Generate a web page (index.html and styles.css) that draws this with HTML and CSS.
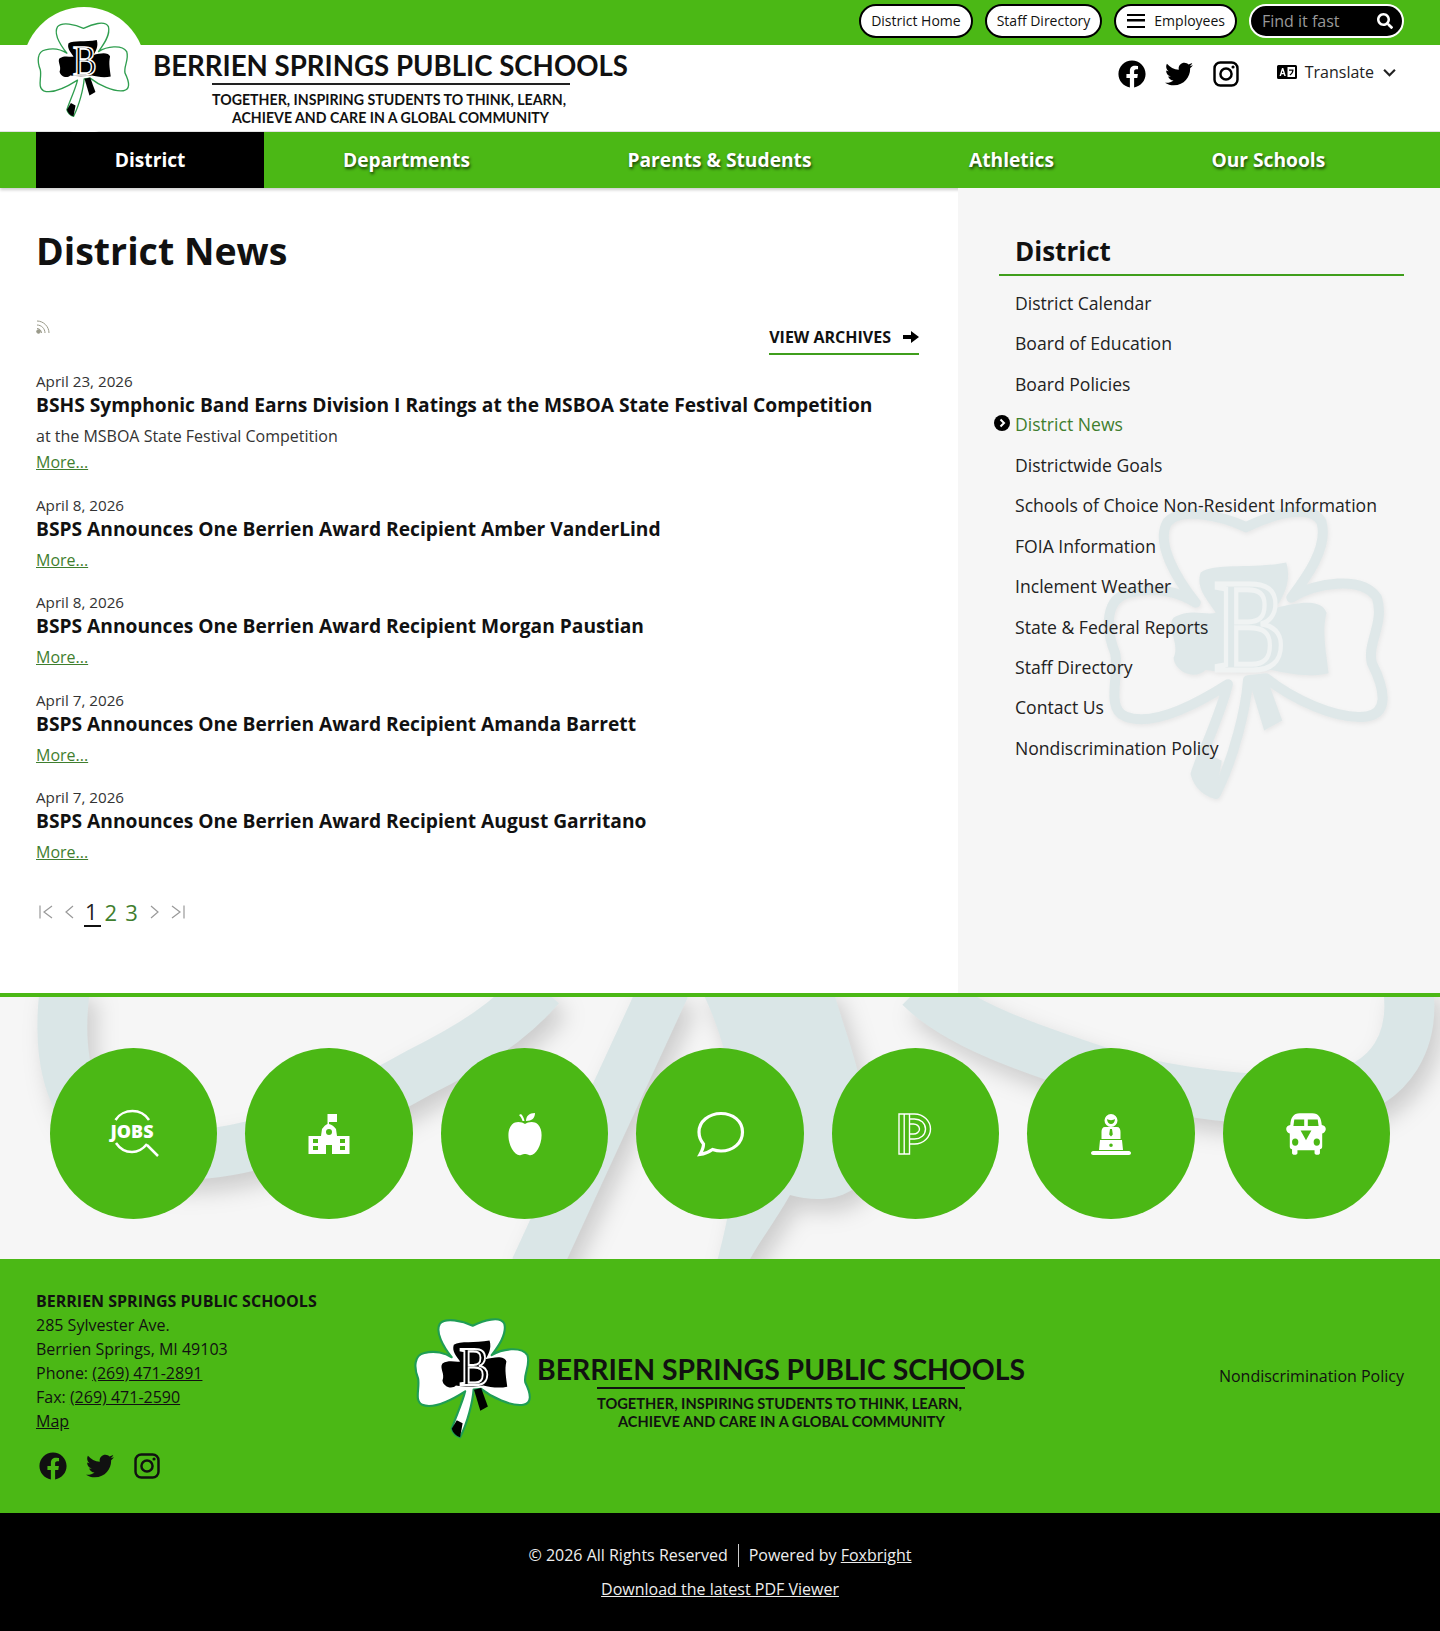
FILE: index.html
```html
<!DOCTYPE html>
<html lang="en">
	<head>
		<meta charset="UTF-8" />
		<meta name="viewport" content="width=device-width, initial-scale=1.0" />
		<title>District News</title>
		<link rel="stylesheet" href="styles.css">
	</head>

	<body>
		<svg class="defs" aria-hidden="true">
			<symbol id="clover" viewBox="48 48 290 295" overflow="visible">
				<path class="clover-leaf" d="M140 145C120 120 100 85 112 65C125 50 165 58 190 70C215 58 255 45 265 65C272 90 250 120 235 140C260 125 305 118 320 140C328 165 310 185 315 205C330 235 330 255 310 258C280 262 235 240 210 220L192 222C190 250 178 300 160 335C150 332 143 325 140 315C150 285 165 255 172 226C150 240 100 270 70 258C50 250 65 215 60 195C50 170 50 140 75 135C100 128 125 135 140 145Z" />
				<path class="clover-blob" d="M145 115C160 105 195 112 230 105C236 125 226 140 220 150C240 145 265 140 270 155C265 175 270 195 272 215C250 220 230 215 215 212C195 215 170 215 150 212C140 222 120 215 118 200C125 185 110 170 118 160C135 150 150 158 160 155C150 140 140 130 145 115Z" />
				<path class="clover-blob" d="M193 222L210 218L226 262L208 272Z" />
				<path class="clover-blob" d="M140 315L152 295L166 302L160 335C150 332 143 325 140 315Z" />
				<text class="clover-letter" x="194" y="212" text-anchor="middle" textLength="72" lengthAdjust="spacingAndGlyphs">B</text>
			</symbol>
			<symbol id="ico-facebook" viewBox="0 0 512 512">
				<path d="M504 256C504 119 393 8 256 8S8 119 8 256c0 123.78 90.69 226.38 209.25 245V327.69h-63V256h63v-54.64c0-62.15 37-96.48 93.67-96.48 27.14 0 55.52 4.84 55.52 4.84v61h-31.28c-30.8 0-40.41 19.12-40.41 38.73V256h68.78l-11 71.69h-57.78V501C413.31 482.38 504 379.78 504 256z" />
			</symbol>
			<symbol id="ico-twitter" viewBox="0 0 512 512">
				<path d="M459.37 151.716c.325 4.548.325 9.097.325 13.645 0 138.72-105.583 298.558-298.558 298.558-59.452 0-114.68-17.219-161.137-47.106 8.447.974 16.568 1.299 25.34 1.299 49.055 0 94.213-16.568 130.274-44.832-46.132-.975-84.792-31.188-98.112-72.772 6.498.974 12.995 1.624 19.818 1.624 9.421 0 18.843-1.3 27.614-3.573-48.081-9.747-84.143-51.98-84.143-102.985v-1.299c13.969 7.797 30.214 12.67 47.431 13.319-28.264-18.843-46.781-51.005-46.781-87.391 0-19.492 5.197-37.36 14.294-52.954 51.655 63.675 129.3 105.258 216.365 109.807-1.624-7.797-2.599-15.918-2.599-24.04 0-57.828 46.782-104.934 104.934-104.934 30.213 0 57.502 12.67 76.67 33.137 23.715-4.548 46.456-13.32 66.599-25.34-7.798 24.366-24.366 44.833-46.132 57.827 21.117-2.273 41.584-8.122 60.426-16.243-14.292 20.791-32.161 39.308-52.628 54.253z" />
			</symbol>
			<symbol id="ico-instagram" viewBox="0 0 448 512">
				<rect x="28" y="60" width="392" height="392" rx="100" fill="none" stroke="currentColor" stroke-width="42" />
				<circle cx="224" cy="256" r="95" fill="none" stroke="currentColor" stroke-width="42" />
				<circle cx="344" cy="136" r="27" />
			</symbol>
			<symbol id="ico-search" viewBox="0 0 512 512">
				<path d="M505 442.7L405.3 343c-4.5-4.5-10.6-7-17-7H372c27.6-35.3 44-79.7 44-128C416 93.1 322.9 0 208 0S0 93.1 0 208s93.1 208 208 208c48.3 0 92.7-16.4 128-44v16.3c0 6.4 2.5 12.5 7 17l99.7 99.7c9.4 9.4 24.6 9.4 33.9 0l28.3-28.3c9.4-9.4 9.4-24.6.1-34zM208 336c-70.7 0-128-57.2-128-128 0-70.7 57.2-128 128-128 70.7 0 128 57.2 128 128 0 70.7-57.2 128-128 128z" />
			</symbol>
		</svg>

		<div class="top-bar">
			<a class="pill" href="#">District Home</a>
			<a class="pill" href="#">Staff Directory</a>
			<a class="pill pill-menu" href="#"><span class="burger"></span>Employees</a>
			<div class="search">
				<span>Find it fast</span>
				<svg class="search-ico"><use href="#ico-search" /></svg>
			</div>
		</div>

		<header class="site-header">
			<div class="badge">
				<svg class="badge-clover"><use href="#clover" /></svg>
			</div>
			<svg class="brand" viewBox="0 0 480 84" width="480" height="84">
				<text class="brand-name" x="0" y="31" textLength="475" lengthAdjust="spacingAndGlyphs">BERRIEN SPRINGS PUBLIC SCHOOLS</text>
				<rect x="59" y="38" width="358" height="2" fill="#222" />
				<text class="brand-tag" x="59" y="60" textLength="354" lengthAdjust="spacingAndGlyphs">TOGETHER, INSPIRING STUDENTS TO THINK, LEARN,</text>
				<text class="brand-tag" x="79" y="78" textLength="317" lengthAdjust="spacingAndGlyphs">ACHIEVE AND CARE IN A GLOBAL COMMUNITY</text>
			</svg>
			<div class="header-tools">
				<div class="social">
					<a href="#"><svg class="social-ico"><use href="#ico-facebook" /></svg></a>
					<a href="#"><svg class="social-ico"><use href="#ico-twitter" /></svg></a>
					<a href="#"><svg class="social-ico"><use href="#ico-instagram" /></svg></a>
				</div>
				<div class="translate">
					<svg class="translate-ico" viewBox="0 0 20 14">
						<path d="M1.5 0h17A1.5 1.5 0 0 1 20 1.500v11a1.500 1.500 0 0 1-1.500 1.500h-17A1.500 1.500 0 0 1 0 12.500v-11A1.500 1.500 0 0 1 1.500 0z" />
						<rect x="10.500" y="2" width="7.500" height="10" fill="#fff" />
						<path d="M2.500 11L5 3h1.300l2.500 8H7.300l-.5-1.700H4.500L4 11zM4.900 8h1.500l-.7-2.600z" fill="#fff" />
						<path d="M12 4.500h4.500v1.200c-.4 2-1.500 3.600-3.300 4.800l-.7-1c1.500-1 2.300-2.100 2.600-3.800H12z" />
					</svg>
					<span>Translate</span>
					<svg class="chevron" viewBox="0 0 12 8"><path d="M1 1.500l5 5 5-5" /></svg>
				</div>
			</div>
		</header>

		<nav class="main-nav">
			<a class="active" href="#">District</a>
			<a href="#">Departments</a>
			<a href="#">Parents &amp; Students</a>
			<a href="#">Athletics</a>
			<a href="#">Our Schools</a>
		</nav>

		<div class="page">
			<main class="content">
				<h1>District News</h1>
				<div class="news-tools">
					<svg class="rss" viewBox="0 0 14 14">
						<path d="M1 1c6.500 0 12 5.500 12 12M1 5c4.400 0 8 3.600 8 8" />
						<circle cx="2.500" cy="11.500" r="1.800" />
						<path d="M1 8.500c2.500 0 4.500 2 4.500 4.500" />
					</svg>
					<a class="archives" href="#">VIEW ARCHIVES
						<svg class="arrow" viewBox="0 0 16 12"><path d="M0 4h8V0l8 6-8 6V8H0z" /></svg>
					</a>
				</div>

				<article class="news-item">
					<div class="news-date">April 23, 2026</div>
					<h2>BSHS Symphonic Band Earns Division I Ratings at the MSBOA State Festival Competition</h2>
					<p>at the MSBOA State Festival Competition</p>
					<a class="more" href="#">More...</a>
				</article>
				<article class="news-item">
					<div class="news-date">April 8, 2026</div>
					<h2>BSPS Announces One Berrien Award Recipient Amber VanderLind</h2>
					<a class="more" href="#">More...</a>
				</article>
				<article class="news-item">
					<div class="news-date">April 8, 2026</div>
					<h2>BSPS Announces One Berrien Award Recipient Morgan Paustian</h2>
					<a class="more" href="#">More...</a>
				</article>
				<article class="news-item">
					<div class="news-date">April 7, 2026</div>
					<h2>BSPS Announces One Berrien Award Recipient Amanda Barrett</h2>
					<a class="more" href="#">More...</a>
				</article>
				<article class="news-item">
					<div class="news-date">April 7, 2026</div>
					<h2>BSPS Announces One Berrien Award Recipient August Garritano</h2>
					<a class="more" href="#">More...</a>
				</article>

				<div class="pager">
					<svg class="pager-ico" viewBox="0 0 16 16"><path d="M2 1.500v13M14 2L6 8l8 6" /></svg>
					<svg class="pager-ico pager-prev" viewBox="0 0 16 16"><path d="M11 2L4 8l7 6" /></svg>
					<a class="current" href="#">1</a>
					<a href="#">2</a>
					<a href="#">3</a>
					<svg class="pager-ico" viewBox="0 0 16 16"><path d="M5 2l7 6-7 6" /></svg>
					<svg class="pager-ico" viewBox="0 0 16 16"><path d="M2 2l8 6-8 6M14 1.500v13" /></svg>
				</div>
			</main>

			<aside class="sidebar">
				<svg class="sidebar-mark"><use href="#clover" /></svg>
				<h2>District</h2>
				<ul>
					<li><a href="#">District Calendar</a></li>
					<li><a href="#">Board of Education</a></li>
					<li><a href="#">Board Policies</a></li>
					<li class="current">
						<svg class="current-dot" viewBox="0 0 16 16"><circle cx="8" cy="8" r="8" /><path d="M6.500 4.500L10 8l-3.500 3.500" /></svg>
						<a href="#">District News</a>
					</li>
					<li><a href="#">Districtwide Goals</a></li>
					<li><a href="#">Schools of Choice Non-Resident Information</a></li>
					<li><a href="#">FOIA Information</a></li>
					<li><a href="#">Inclement Weather</a></li>
					<li><a href="#">State &amp; Federal Reports</a></li>
					<li><a href="#">Staff Directory</a></li>
					<li><a href="#">Contact Us</a></li>
					<li><a href="#">Nondiscrimination Policy</a></li>
				</ul>
			</aside>
		</div>

		<section class="quick-links">
			<svg class="band-mark" viewBox="0 0 1440 262" preserveAspectRatio="none">
				<g class="band-strokes">
					<path d="M65 -10C55 70 70 135 150 155C240 170 340 120 420 75C470 50 510 25 540 -10" />
					<path d="M535 272L665 -10" />
					<path class="band-fill" d="M700 -10H832C850 50 875 110 868 170C860 200 825 208 790 198C775 225 755 250 745 272H715C735 200 755 100 700 -10Z" />
					<path d="M920 -10C960 30 1040 55 1110 78C1170 95 1260 108 1330 100C1395 88 1415 40 1408 -10" />
				</g>
			</svg>
			<a class="quick-link" href="#">
				<svg class="quick-ico" viewBox="0 0 50 50">
					<path class="line" d="M6.500 11C10 5 17 2 23.500 2S36 5 40 11M7 34c4 6 10 9 16 9 6 0 11-3 15-8" />
					<path class="line" d="M38 36l11 11" stroke-width="3.200" />
					<text class="jobs-text" x="1.500" y="29" textLength="43" lengthAdjust="spacingAndGlyphs">JOBS</text>
				</svg>
			</a>
			<a class="quick-link" href="#">
				<svg class="quick-ico" viewBox="0 0 50 50">
					<path class="solid" d="M23.500 5H33v8H25v2c3 .7 5 2.500 7 5l1 7h12.500v18h-41V27H17l1-7c2-2.500 3.500-4.300 5.500-5z" />
					<path d="M22 36h6v9h-6zM25 20a3 3 0 1 1 0 6 3 3 0 0 1 0-6zM9 30h5v4H9zM36 30h5v4h-5zM9 37h5v4H9zM36 37h5v4h-5z" fill="#4bb815" />
				</svg>
			</a>
			<a class="quick-link" href="#">
				<svg class="quick-ico" viewBox="0 0 50 50">
					<path class="solid" d="M25 15c-3-2-9-3.500-13 .5C6.500 21 8 33 12 40c2.500 4.500 6 7 9 6 2-.6 2.500-1 4-1s2 .4 4 1c3 1 6.500-1.500 9-6 4-7 5.500-19 0-24.500-4-4-10-2.500-13-.5z" />
					<path class="solid" d="M26 12c0-5 3-8 9-8 0 5-3 8-9 8zM19 6l2-1c2 2 3 4 3.500 7h-2c-.5-2-1.500-4-3.500-6z" />
				</svg>
			</a>
			<a class="quick-link" href="#">
				<svg class="quick-ico" viewBox="0 0 50 50">
					<path class="line chat" d="M26 4.500C14 4.500 4 12.500 4 23c0 4.500 1.500 8.500 4.500 12 0 3.500-1.500 7-3.500 10.500 4.500-.5 9-2.500 12.500-5 3 1 5.500 1.500 8.500 1.500 12 0 21.500-8 21.500-19S38 4.500 26 4.500z" />
				</svg>
			</a>
			<a class="quick-link" href="#">
				<svg class="quick-ico" viewBox="0 0 50 50">
					<path class="line thin" d="M9 5h10.500v40H9zM14.200 5v40M19.500 5h5c9 0 16 7 16 15s-7 15-16 15h-5M19.500 10h5c6 0 11 4 11 10s-5 10-11 10h-5M19.500 15h4c3 0 6 2 6 5s-3 5-6 5h-4" />
				</svg>
			</a>
			<a class="quick-link" href="#">
				<svg class="quick-ico" viewBox="0 0 50 50">
					<path class="solid" d="M25 5a6.500 6.500 0 1 1 0 13 6.500 6.500 0 0 1 0-13zM19 18h12c2.500 0 3.500 2 3.500 5v7h-19v-7c0-3 1-5 3.500-5zM14 31h22l1 10H13zM7 42h36c1 0 2 1 2 2s-1 2-2 2H7c-1 0-2-1-2-2s1-2 2-2z" />
					<path d="M25 34.500a1.800 1.800 0 1 1 0 3.600 1.800 1.800 0 0 1 0-3.600zM24 20h2l.8 5.500L25 27.500l-1.800-2zM21 10c2 1.500 6 1.500 8 0 0 3-2 5-4 5s-4-2-4-5z" fill="#4bb815" />
				</svg>
			</a>
			<a class="quick-link" href="#">
				<svg class="quick-ico" viewBox="0 0 50 50">
					<g transform="translate(25 25) scale(.9) translate(-25 -26)">
						<path class="solid" d="M18 3h14c7 0 10 5 10.500 13 2.500.5 4.500 2 4.500 4.500S45 25 43 25.500V40c0 2-1 3-2.500 3V47c0 1-1 2-3 2s-3-1-3-2v-3H15.500v3c0 1-1 2-3 2s-3-1-3-2V43C8 43 7 42 7 40V25.500C5 25 3 23 3 20.500S5 16.500 7.500 16C8 8 11 3 18 3z" />
						<path d="M12 10h11v7H11zM27 10h11l1 7H27zM19 22h12l-6 11zM13 31a3.500 4 0 1 1 0 8 3.500 4 0 0 1 0-8zM37 31a3.500 4 0 1 1 0 8 3.500 4 0 0 1 0-8z" fill="#4bb815" />
					</g>
				</svg>
			</a>
		</section>

		<footer class="site-footer">
			<div class="address">
				<strong>BERRIEN SPRINGS PUBLIC SCHOOLS</strong>
				<div>285 Sylvester Ave.</div>
				<div>Berrien Springs, MI 49103</div>
				<div>Phone: <a href="#">(269) 471-2891</a></div>
				<div>Fax: <a href="#">(269) 471-2590</a></div>
				<div><a href="#">Map</a></div>
				<div class="social">
					<a href="#"><svg class="social-ico"><use href="#ico-facebook" /></svg></a>
					<a href="#"><svg class="social-ico"><use href="#ico-twitter" /></svg></a>
					<a href="#"><svg class="social-ico"><use href="#ico-instagram" /></svg></a>
				</div>
			</div>
			<div class="footer-logo">
				<svg class="footer-clover"><use href="#clover" /></svg>
				<svg class="brand" viewBox="0 0 490 84" width="490" height="84">
					<text class="brand-name" x="0" y="31" textLength="488" lengthAdjust="spacingAndGlyphs">BERRIEN SPRINGS PUBLIC SCHOOLS</text>
					<rect x="60" y="38" width="368" height="2" fill="#111" />
					<text class="brand-tag" x="60" y="60" textLength="365" lengthAdjust="spacingAndGlyphs">TOGETHER, INSPIRING STUDENTS TO THINK, LEARN,</text>
					<text class="brand-tag" x="81" y="78" textLength="327" lengthAdjust="spacingAndGlyphs">ACHIEVE AND CARE IN A GLOBAL COMMUNITY</text>
				</svg>
			</div>
			<div class="footer-right"><a href="#">Nondiscrimination Policy</a></div>
		</footer>

		<div class="legal">
			<div class="legal-row">
				<span class="copyright">© 2026 All Rights Reserved</span>
				<span>Powered by <a href="#">Foxbright</a></span>
			</div>
			<div><a href="#">Download the latest PDF Viewer</a></div>
		</div>
	</body>
</html>
```

FILE: styles.css
```css
* {
	box-sizing: border-box;
}

body {
	margin: 0;
	font-family: 'Open Sans', sans-serif;
	color: #111;
	background: #fff;
}

.defs {
	display: none;
}

h1,
h2,
p,
ul {
	margin: 0;
	padding: 0;
}

/* shamrock colours, overridden per use */
.clover-leaf {
	fill: var(--leaf, #fff);
	stroke: var(--edge, #2f9e4f);
	stroke-width: var(--edge-w, 4);
	stroke-linejoin: round;
}
.clover-blob {
	fill: var(--blob, #000);
}
.clover-letter {
	font-family: 'Liberation Serif', serif;
	font-size: 130px;
	fill: var(--blob, #000);
	stroke: var(--letter, #fff);
	stroke-width: 5;
}

.top-bar {
	display: flex;
	justify-content: flex-end;
	align-items: center;
	gap: 12px;
	height: 45px;
	padding: 0 36px 4px;
	background: #4bb815;
}

.pill {
	display: flex;
	align-items: center;
	height: 34px;
	padding: 0 10px;
	border: 2px solid #000;
	border-radius: 17px;
	background: #fff;
	color: #111;
	font-size: 14px;
	text-decoration: none;
}
.pill-menu {
	padding-left: 9px;
}
.burger {
	width: 18px;
	height: 14px;
	margin: 0 9px 0 2px;
	border-top: 2.500px solid #000;
	border-bottom: 2.500px solid #000;
	background: linear-gradient(#000, #000) center / 100% 2.500px no-repeat;
}

.search {
	display: flex;
	align-items: center;
	justify-content: space-between;
	width: 155px;
	height: 34px;
	padding: 0 9px 0 11px;
	border: 2px solid #fff;
	border-radius: 17px;
	background: #000;
	color: #999;
	font-size: 16px;
}
.search-ico {
	width: 16px;
	height: 16px;
	fill: #fff;
}

.site-header {
	position: relative;
	display: flex;
	align-items: flex-start;
	height: 87px;
	padding-left: 153px;
	border-bottom: 1px solid #e4e4e4;
}

.badge {
	position: absolute;
	top: -38px;
	left: 22px;
	width: 124px;
	height: 126px;
	border-radius: 50%;
	background: #fff;
}
.badge-clover {
	position: absolute;
	top: 14px;
	left: 14px;
	width: 97px;
	height: 98px;
}

.brand {
	overflow: visible;
}
.brand-name {
	font-family: Lato, sans-serif;
	font-size: 29px;
	font-weight: 700;
	fill: #111;
}
.brand-tag {
	font-family: Lato, sans-serif;
	font-size: 15.500px;
	font-weight: 700;
	fill: #111;
}

.header-tools {
	display: flex;
	align-items: center;
	margin-left: auto;
	padding: 14px 44px 0 0;
}
.social {
	display: flex;
	gap: 19px;
}
.social a {
	display: block;
	height: 30px;
	color: #000;
}
.social-ico {
	width: 28px;
	height: 30px;
	fill: currentColor;
}
.translate {
	display: flex;
	align-items: center;
	margin: -4px 0 0 37px;
	font-size: 16px;
	color: #222;
}
.translate-ico {
	width: 20px;
	height: 14px;
	margin-right: 8px;
}
.chevron {
	width: 13px;
	height: 9px;
	margin-left: 9px;
	fill: none;
	stroke: #222;
	stroke-width: 2;
}

.main-nav {
	position: relative;
	display: flex;
	height: 56px;
	padding: 0 36px;
	background: #4bb815;
	box-shadow: 0 2px 3px rgba(0, 0, 0, 0.2);
}
.main-nav a {
	flex: 1 1 auto;
	display: flex;
	align-items: center;
	justify-content: center;
	padding-bottom: 2px;
	color: #fff;
	font-size: 19.200px;
	font-weight: 700;
	text-decoration: none;
	text-shadow: 1px 2px 3px rgba(0, 0, 0, 0.65);
}
.main-nav a.active {
	background: #000;
	text-shadow: none;
}

.page {
	display: flex;
	height: 805px;
}

.content {
	flex: 0 0 958px;
	padding: 40px 39px 0 36px;
}
.content h1 {
	font-size: 37.500px;
	line-height: 46px;
}

.news-tools {
	display: flex;
	justify-content: space-between;
	align-items: flex-start;
	margin-top: 38px;
	height: 58px;
}
.rss {
	width: 14px;
	height: 14px;
	margin-top: 8px;
	fill: #9a9a8a;
	stroke: #9a9a8a;
	stroke-width: 1;
}
.rss path {
	fill: none;
}
.archives {
	display: flex;
	align-items: center;
	gap: 12px;
	height: 35px;
	margin-top: 8px;
	border-bottom: 2px solid #3f9e1c;
	color: #111;
	font-size: 16px;
	font-weight: 700;
	text-decoration: none;
}
.arrow {
	width: 16px;
	height: 12px;
}

.news-item {
	margin-bottom: 17.500px;
	font-size: 16px;
}
.news-date {
	font-size: 15.200px;
	line-height: 23px;
	color: #333;
}
.news-item h2 {
	font-size: 19.200px;
	line-height: 24px;
	font-weight: 700;
	margin-bottom: 6px;
}
.news-item p {
	line-height: 26px;
	color: #333;
	font-size: 16px;
}
.more {
	display: block;
	line-height: 27px;
	color: #3f7e2e;
	font-size: 16px;
}

.pager {
	display: flex;
	align-items: center;
	gap: 8px;
	margin: 31px 0 0 2px;
	font-size: 22px;
}
.pager a {
	color: #3f7e2e;
	text-decoration: none;
	line-height: 28px;
}
.pager a.current {
	margin-right: -4px;
	padding: 0 3px 0 1px;
	color: #222;
	border-bottom: 2px solid #111;
}
.pager-prev {
	margin-right: -2px;
}
.pager-ico {
	width: 16px;
	height: 16px;
	fill: none;
	stroke: #999;
	stroke-width: 1.200;
}

.sidebar {
	position: relative;
	flex: 1;
	padding: 40px 36px 0 41px;
	background: #f6f6f6;
	overflow: hidden;
}
.sidebar-mark {
	position: absolute;
	top: 313px;
	left: 145px;
	width: 292px;
	height: 305px;
	overflow: visible;
	--leaf: transparent;
	--edge: #dfe8e9;
	--edge-w: 10;
	--blob: #dfe8e9;
	--letter: #f0f3f3;
	filter: drop-shadow(1px 2px 2px rgba(0, 0, 0, 0.06));
}
.sidebar h2 {
	position: relative;
	height: 48px;
	padding-left: 16px;
	border-bottom: 2px solid #3f9e1c;
	font-size: 26px;
	line-height: 46px;
}
.sidebar ul {
	position: relative;
	list-style: none;
	margin-top: 7px;
}
.sidebar li {
	position: relative;
	height: 40.450px;
	padding-left: 16px;
	font-size: 17.600px;
	line-height: 40px;
}
.sidebar li a {
	color: #222;
	text-decoration: none;
}
.sidebar li.current a {
	color: #3f7e2e;
}
.current-dot {
	position: absolute;
	top: 11px;
	left: -5px;
	width: 16px;
	height: 16px;
	fill: #000;
	stroke: none;
}
.current-dot path {
	fill: none;
	stroke: #fff;
	stroke-width: 2;
}

.quick-links {
	position: relative;
	display: grid;
	grid-template-columns: repeat(7, 1fr);
	height: 266px;
	padding: 51px 36px 0;
	border-top: 4px solid #4bb815;
	background: #f6f6f6;
	overflow: hidden;
}
.band-mark {
	position: absolute;
	top: 0;
	left: 0;
	width: 100%;
	height: 100%;
}
.band-strokes {
	fill: none;
	stroke: #dae6e7;
	stroke-width: 50;
	filter: drop-shadow(8px 12px 11px rgba(0, 0, 0, 0.17));
}
.band-strokes .band-fill {
	fill: #dae6e7;
	stroke: none;
}
.quick-link {
	position: relative;
	display: flex;
	align-items: center;
	justify-content: center;
	height: 171px;
	margin: 0 14px;
	border-radius: 50%;
	background: #4bb815;
}
.quick-ico {
	width: 50px;
	height: 50px;
	overflow: visible;
}
.quick-ico .solid {
	fill: #fff;
}
.quick-ico .line {
	fill: none;
	stroke: #fff;
	stroke-width: 2.500;
}
.quick-ico .chat {
	stroke-width: 3.200;
}
.quick-ico .thin {
	stroke-width: 1.400;
}
.jobs-text {
	font-family: 'Open Sans', sans-serif;
	font-size: 17px;
	font-weight: 800;
	fill: #fff;
}

.site-footer {
	display: grid;
	grid-template-columns: 1fr auto 1fr;
	height: 254px;
	padding: 30px 36px 0;
	background: #4bb815;
	font-size: 16px;
	line-height: 24px;
	color: #111;
}
.address strong {
	font-weight: 700;
}
.site-footer a {
	color: #111;
}
.address .social {
	margin: 18px 0 0 3px;
}
.footer-logo {
	display: flex;
	align-items: flex-start;
	padding-top: 27px;
}
.footer-clover {
	width: 122px;
	height: 125px;
	margin-right: 2px;
	overflow: visible;
	--edge: #1f9d55;
	--edge-w: 5;
}
.footer-logo .brand {
	margin-top: 33px;
}
.footer-right {
	padding-top: 75px;
	text-align: right;
}
.footer-right a {
	text-decoration: none;
}

.legal {
	display: flex;
	flex-direction: column;
	align-items: center;
	gap: 11px;
	height: 118px;
	padding-top: 31px;
	background: #000;
	color: #eee;
	font-size: 16px;
	line-height: 23px;
}
.legal a {
	color: #eee;
}
.legal-row {
	display: flex;
}
.copyright {
	padding-right: 10px;
	margin-right: 10px;
	border-right: 1px solid #ccc;
}
```
